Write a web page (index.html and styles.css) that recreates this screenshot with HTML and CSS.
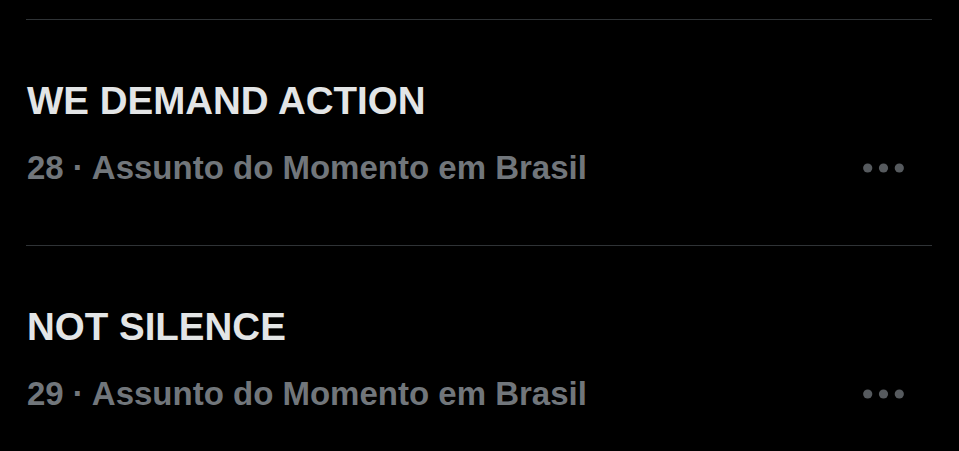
FILE: index.html
```html
<!DOCTYPE html>
<html>
<head>
<meta charset="utf-8">
<link rel="stylesheet" href="styles.css">
</head>
<body>
    <div class="trend-list">
        <div class="trend">
            <div class="trend-title">WE DEMAND ACTION</div>
            <div class="trend-meta">
                <span>28 · Assunto do Momento em Brasil</span>
                <svg class="more" width="41" height="10" viewBox="0 0 41 10">
                    <circle cx="4.7" cy="5" r="4.6"></circle>
                    <circle cx="20.5" cy="5" r="4.6"></circle>
                    <circle cx="36.3" cy="5" r="4.6"></circle>
                </svg>
            </div>
        </div>
        <div class="trend">
            <div class="trend-title">NOT SILENCE</div>
            <div class="trend-meta">
                <span>29 · Assunto do Momento em Brasil</span>
                <svg class="more" width="41" height="10" viewBox="0 0 41 10">
                    <circle cx="4.7" cy="5" r="4.6"></circle>
                    <circle cx="20.5" cy="5" r="4.6"></circle>
                    <circle cx="36.3" cy="5" r="4.6"></circle>
                </svg>
            </div>
        </div>
    </div>
</body>
</html>
```

FILE: styles.css
```css
body {
    margin: 0;
    background-color: #000000;
    font-family: "Liberation Sans", Arial, sans-serif;
    overflow: hidden;
}

.trend-list {
    padding: 19px 27px 0 26px;
}

.trend {
    border-top: 1px solid #2f3336;
    padding: 58px 0 57px 1px;
}

.trend-title {
    color: #e3e5e6;
    font-size: 38.5px;
    font-weight: bold;
    line-height: 46px;
    margin-bottom: 24px;
    white-space: nowrap;
}

.trend-meta {
    display: flex;
    align-items: center;
    justify-content: space-between;
    color: #71767b;
    font-size: 33px;
    font-weight: bold;
    line-height: 40px;
    padding-right: 28px;
    white-space: nowrap;
}

.more {
    display: block;
    fill: #565a5e;
}
```
